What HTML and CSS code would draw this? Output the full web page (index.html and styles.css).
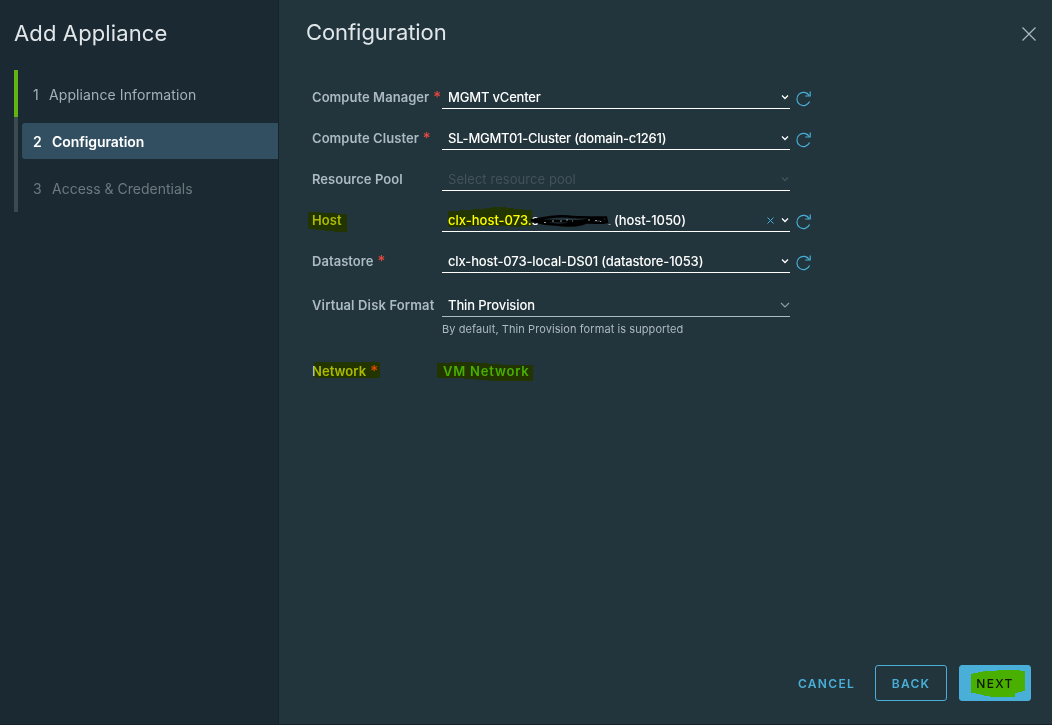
FILE: index.html
```html
<!DOCTYPE html>
<html lang="en">
<head>
    <meta charset="UTF-8">
    <meta name="viewport" content="width=device-width, initial-scale=1.0">
    <title>Add Appliance</title>
    <link rel="stylesheet" href="styles.css">
</head>
<body>
    <svg class="symbols">
        <symbol id="caret" viewBox="0 0 10 8">
            <path d="M2 2.5 L5 5.5 L8 2.5" fill="none" stroke="currentColor" stroke-width="1.3"/>
        </symbol>
        <symbol id="caret-wide" viewBox="0 0 10 8">
            <path d="M1 2 L5 6 L9 2" fill="none" stroke="currentColor" stroke-width="1.2"/>
        </symbol>
        <symbol id="refresh" viewBox="0 0 16 18">
            <path d="M13.2 5.6 A6.6 6.6 0 1 0 13.6 11.6" fill="none" stroke="currentColor" stroke-width="1.2"/>
            <path d="M14.2 1.4 V6 H9.2" fill="none" stroke="currentColor" stroke-width="1.2"/>
        </symbol>
    </svg>

    <div class="wizard">
        <aside class="sidebar">
            <h1 class="wizard-title">Add Appliance</h1>
            <ol class="steps">
                <li class="step done"><span class="num">1</span><span class="step-name">Appliance Information</span></li>
                <li class="step current"><div class="step-box"><span class="num">2</span><span class="step-name">Configuration</span></div></li>
                <li class="step"><span class="num">3</span><span class="step-name">Access &amp; Credentials</span></li>
            </ol>
        </aside>

        <main class="content">
            <header class="header">
                <h2 class="page-title">Configuration</h2>
                <svg class="close" viewBox="0 0 14 14"><path d="M0.5 0.5 L13.5 13.5 M13.5 0.5 L0.5 13.5" stroke="currentColor" stroke-width="1.2"/></svg>
            </header>

            <form class="form">
                <div class="row">
                    <label class="label">Compute Manager<b class="req">*</b></label>
                    <div class="select"><span class="value v-manager">MGMT vCenter</span><svg class="caret"><use href="#caret"/></svg></div>
                    <svg class="refresh"><use href="#refresh"/></svg>
                </div>
                <div class="row">
                    <label class="label">Compute Cluster<b class="req">*</b></label>
                    <div class="select"><span class="value v-cluster">SL-MGMT01-Cluster (domain-c1261)</span><svg class="caret"><use href="#caret"/></svg></div>
                    <svg class="refresh"><use href="#refresh"/></svg>
                </div>
                <div class="row">
                    <label class="label">Resource Pool</label>
                    <div class="select disabled"><span class="value v-pool">Select resource pool</span><svg class="caret"><use href="#caret"/></svg></div>
                </div>
                <div class="row">
                    <label class="label">Host
                        <svg class="marker m-host" viewBox="0 0 40 21"><path d="M0 0 H14 V1 H29 V2 H39 V20 H26 V19 H17 V18 H8 V17 H0 Z"/></svg>
                    </label>
                    <div class="select">
                        <span class="value v-host">clx-host-073.s</span>
                        <span class="value v-host-id">(host-1050)</span>
                        <svg class="clear" viewBox="0 0 7 7"><path d="M0.5 0.5 L6.5 6.5 M6.5 0.5 L0.5 6.5" stroke="currentColor"/></svg>
                        <svg class="caret"><use href="#caret"/></svg>
                        <svg class="marker m-hostname" viewBox="0 0 84 21"><path d="M0 4 H12 V3 H25 V2 H37 V1 H44 V0 H58 V1 H66 V2 H75 V3 H84 V19 H73 V20 H62 V19 H20 V20 H0 Z"/></svg>
                        <svg class="scribble" viewBox="0 0 82 14">
                            <path d="M1 6.5 C14 4 24 1 38 2.5 S64 3 76 3.5 L77 8 C66 11 54 6 44 9 S16 11 3 7 C20 5 34 9 50 7 S70 2 76 9 M8 7 C24 11 42 13 52 10 S66 4 72 5"/>
                            <path class="leftover" d="M14 8.5 H16 M22 7 H24 M30 7 H32 M36 6 H38 M42 7 H43 M58 6 H60 M65 6.5 H67 M70 7.5 H71 M78.5 10.5 H80.5"/>
                        </svg>
                    </div>
                    <svg class="refresh"><use href="#refresh"/></svg>
                </div>
                <div class="row">
                    <label class="label">Datastore<b class="req">*</b></label>
                    <div class="select"><span class="value v-datastore">clx-host-073-local-DS01 (datastore-1053)</span><svg class="caret"><use href="#caret"/></svg></div>
                    <svg class="refresh"><use href="#refresh"/></svg>
                </div>
                <div class="row row-disk">
                    <label class="label l-disk">Virtual Disk Format</label>
                    <div class="select plain"><span class="value v-disk">Thin Provision</span><svg class="caret"><use href="#caret-wide"/></svg></div>
                </div>
                <p class="helper">By default, Thin Provision format is supported</p>
                <div class="row row-network">
                    <label class="label l-network">Network<b class="req">*</b>
                        <svg class="marker m-network" viewBox="0 0 66 16"><path d="M0 0 H66 V16 H2 V15 H0 Z"/></svg>
                    </label>
                    <a class="network-link">VM Network
                        <svg class="marker m-vm" viewBox="0 0 96 19"><path d="M0 1 H14 V0 H38 V1 H51 V2 H64 V3 H96 V19 H52 V18 H40 V17 H28 V16 H0 Z"/></svg>
                    </a>
                </div>
            </form>

            <footer class="footer">
                <button class="btn btn-link">CANCEL</button>
                <button class="btn btn-outline">BACK</button>
                <button class="btn btn-primary">NEXT
                    <svg class="marker m-next" viewBox="0 0 54 27"><path d="M0 4 H2 V3 H7 V2 H12 V1 H26 V0 H49 V1 H54 V21 H51 V22 H47 V23 H44 V27 H19 V26 H13 V25 H10 V24 H5 V23 H0 Z"/></svg>
                </button>
            </footer>
        </main>
    </div>
</body>
</html>
```

FILE: styles.css
```css
* {
    box-sizing: border-box;
}
body {
    margin: 0;
    background-color: #22343c;
    font-family: Inter, "Open Sans", sans-serif;
    font-size: 13px;
    color: #acbac3;
}
.symbols {
    display: none;
}
.wizard {
    display: flex;
    width: 1052px;
    height: 725px;
    overflow: hidden;
    border-bottom: 1px solid #17242b;
}
.sidebar {
    width: 279px;
    flex: none;
    background-color: #1b2a32;
    border-right: 1px solid #15232a;
    padding: 18px 0 0 14px;
}
.wizard-title,
.page-title {
    margin: 0;
    font-size: 22px;
    font-weight: 400;
    line-height: 30px;
    color: #e1e6e9;
    white-space: nowrap;
}
.wizard-title {
    letter-spacing: 0.13px;
}
.page-title {
    letter-spacing: -0.07px;
}

/* steps */
.steps {
    list-style: none;
    margin: 22px 0 0;
    padding: 0;
    font-size: 14px;
}
.step {
    display: flex;
    align-items: center;
    height: 47px;
    padding: 1px 0 0 15px;
    border-left: 4px solid #3a4a51;
    color: #6c7980;
}
.step:last-child {
    padding-top: 0;
}
.step.done {
    border-color: #60b515;
    color: #a3b1b9;
    letter-spacing: 0.1px;
}
.step.current {
    height: 48px;
    padding: 0 0 0 4px;
}
.step-box {
    display: flex;
    align-items: center;
    flex: 1;
    height: 36px;
    padding: 0 0 0 11px;
    border-radius: 3px 0 0 3px;
    background-color: #324f62;
    color: #fff;
    font-weight: 600;
    letter-spacing: -0.06px;
}
.num {
    width: 19px;
}
.done .num {
    width: 16px;
}

/* content */
.content {
    display: flex;
    flex-direction: column;
    flex: 1;
    padding: 17px 21px 23px 27px;
}
.header {
    display: flex;
    justify-content: space-between;
}
.close {
    width: 14px;
    height: 14px;
    margin: 10px -5px 0 0;
    color: #acbac3;
}
.form {
    flex: 1;
    padding: 37px 0 0 6px;
}
.row {
    display: flex;
    height: 25px;
    margin-bottom: 16px;
}
.label {
    position: relative;
    width: 130px;
    flex: none;
    line-height: 26px;
    font-weight: 600;
    letter-spacing: 0.05px;
    white-space: nowrap;
}
.l-disk {
    letter-spacing: 0.14px;
}
.req {
    margin-left: 4px;
    color: #e8483f;
    font-size: 15px;
    font-weight: 500;
    line-height: 1;
}
.select {
    position: relative;
    display: flex;
    align-items: center;
    width: 348px;
    height: 25px;
    padding: 1px 0 0 6px;
    border-bottom: 1px solid #fff;
    font-weight: 500;
    color: #fff;
    white-space: nowrap;
}
.select.disabled {
    font-weight: 400;
    color: #43535b;
}
.select.plain {
    border-color: #acbac3;
}
.v-manager {
    letter-spacing: -0.18px;
}
.v-cluster {
    letter-spacing: -0.24px;
}
.v-pool {
    letter-spacing: 0.06px;
}
.v-host {
    width: 166px;
}
.v-host-id {
    letter-spacing: -0.08px;
}
.v-datastore {
    letter-spacing: -0.14px;
}
.v-disk {
    letter-spacing: -0.1px;
}
.caret {
    width: 10px;
    height: 8px;
    margin: 1px 0 0 auto;
}
.plain .caret {
    color: #8f9ca3;
}
.clear {
    width: 7px;
    height: 7px;
    margin: 2px -1px 0 auto;
    color: #49afd9;
}
.clear + .caret {
    margin-left: 7px;
}
.refresh {
    width: 16px;
    height: 18px;
    margin: 6px 0 0 6px;
    color: #49afd9;
}
.row-disk {
    margin: 19px 0 0;
}
.helper {
    margin: 4px 0 0 130px;
    font-size: 11px;
    line-height: 16px;
    letter-spacing: 0.08px;
}
.row-network {
    margin-top: 21px;
}
.network-link {
    position: relative;
    line-height: 26px;
    font-weight: 600;
    letter-spacing: 0.8px;
    color: #49afd9;
    padding-left: 1px;
}

/* highlighter strokes and the blacked-out host name */
.marker {
    position: absolute;
    fill: #ffff00;
    mix-blend-mode: multiply;
}
.m-host {
    left: -4px;
    top: 5px;
    width: 40px;
    height: 21px;
}
.m-hostname {
    left: 6px;
    top: 0;
    width: 84px;
    height: 21px;
}
.m-network {
    left: 2px;
    top: 4px;
    width: 66px;
    height: 16px;
}
.m-vm {
    left: -5px;
    top: 4px;
    width: 96px;
    height: 19px;
}
.scribble {
    position: absolute;
    left: 88px;
    top: 7px;
    width: 82px;
    height: 14px;
    fill: none;
    stroke: #000;
    stroke-width: 2.4;
}
.leftover {
    stroke: #8d979c;
    stroke-width: 1;
}

/* buttons */
.footer {
    display: flex;
    justify-content: flex-end;
    gap: 12px;
}
.btn {
    position: relative;
    width: 72px;
    height: 36px;
    padding: 1px 0 0;
    border: 1px solid #49afd9;
    border-radius: 3px;
    background: none;
    color: #49afd9;
    font-family: inherit;
    font-size: 12px;
    font-weight: 600;
    letter-spacing: 1.3px;
}
.btn-link {
    border-color: transparent;
    width: 73px;
}
.btn-primary {
    background-color: #49afd9;
    color: #0f171c;
    font-weight: 500;
}
.m-next {
    left: 11px;
    top: 4px;
    width: 54px;
    height: 27px;
}
```
